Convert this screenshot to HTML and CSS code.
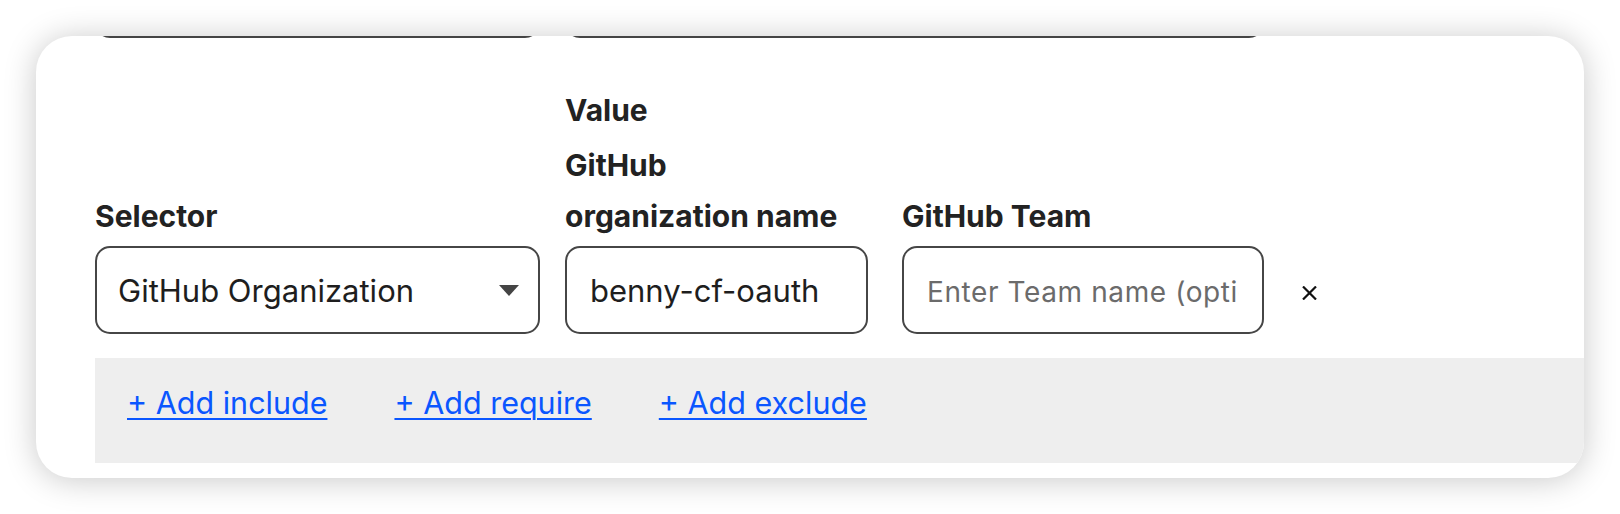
FILE: index.html
```html
<!DOCTYPE html>
<html lang="en">
<head>
    <meta charset="UTF-8">
    <meta name="viewport" content="width=device-width, initial-scale=1.0">
    <title>Access rule</title>
    <link rel="stylesheet" href="styles.css">
</head>
<body>
    <div class="card">
        <!-- previous rule row, scrolled mostly out of view -->
        <div class="prev-row">
            <div class="prev-box prev-selector"></div>
            <div class="prev-box prev-value"></div>
        </div>

        <div class="rule-row">
            <div class="field field-selector">
                <label class="field-label">Selector</label>
                <div class="select-box">
                    <span class="select-text">GitHub Organization</span>
                    <svg class="select-arrow" width="20" height="11" viewBox="0 0 20 11">
                        <path d="M0 0 L20 0 L10 11 Z" fill="#444"/>
                    </svg>
                </div>
            </div>
            <div class="field field-value">
                <div class="field-heading">Value</div>
                <label class="field-label">GitHub<br>organization name</label>
                <input class="text-input" type="text" value="benny-cf-oauth">
            </div>
            <div class="field field-team">
                <label class="field-label">GitHub Team</label>
                <input class="text-input" type="text" placeholder="Enter Team name (optional)">
            </div>
            <button class="remove-btn" type="button" aria-label="Remove">
                <svg width="15" height="14" viewBox="0 0 15 14">
                    <path d="M1 0.5 L14 13.5 M14 0.5 L1 13.5" stroke="#111" stroke-width="2.2" fill="none"/>
                </svg>
            </button>
        </div>

        <div class="add-bar">
            <a href="#" class="add-link">+ Add include</a>
            <a href="#" class="add-link">+ Add require</a>
            <a href="#" class="add-link">+ Add exclude</a>
        </div>
    </div>
</body>
</html>
```

FILE: styles.css
```css
html, body {
    margin: 0;
    padding: 0;
    background-color: #ffffff;
    font-family: Inter, "Noto Sans", sans-serif;
    color: #222222;
}

body {
    padding: 36px;
    box-sizing: border-box;
    height: 514px;
}

.card {
    background-color: #ffffff;
    border-radius: 36px;
    box-shadow: 0 2px 32px rgba(0, 0, 0, 0.22);
    overflow: hidden;
    padding: 0 0 16px 59px;
    height: 442px;
    box-sizing: border-box;
}

.prev-row {
    display: flex;
    height: 2px;
    overflow: hidden;
}

.prev-box {
    height: 30px;
    margin-top: -28px;
    border: 2px solid #444;
    border-radius: 15px;
    box-sizing: border-box;
}

.prev-selector {
    width: 445px;
    margin-right: 25px;
}

.prev-value {
    width: 699px;
}

.rule-row {
    display: flex;
    align-items: flex-end;
    margin-top: 48px;
}

.field {
    display: flex;
    flex-direction: column;
}

.field-selector {
    width: 445px;
    margin-right: 25px;
}

.field-value {
    width: 303px;
    margin-right: 34px;
}

.field-team {
    width: 362px;
}

.field-heading,
.field-label {
    font-size: 30px;
    font-weight: 700;
    color: #222;
}

.field-heading {
    line-height: 49px;
    margin-bottom: 5px;
}

.field-label {
    line-height: 51px;
    margin-bottom: 4px;
}

.select-box,
.text-input {
    height: 88px;
    border: 2px solid #464646;
    border-radius: 15px;
    box-sizing: border-box;
    background: #fff;
    font-family: inherit;
    font-size: 31px;
    color: #1e1e1e;
}

.select-box {
    display: flex;
    align-items: center;
    justify-content: space-between;
    padding: 0 19px 0 21px;
}

.text-input {
    width: 100%;
    padding: 0 23px;
    outline: none;
}

.text-input::placeholder {
    color: #6b6b6b;
    font-size: 28px;
    letter-spacing: 0.6px;
}

.remove-btn {
    background: none;
    border: none;
    padding: 0;
    margin: 0 0 34px 38px;
    width: 15px;
    height: 14px;
    display: flex;
    cursor: pointer;
}

.add-bar {
    display: flex;
    background-color: #eeeeee;
    margin-top: 24px;
    height: 105px;
    padding: 27px 0 0 32px;
    box-sizing: border-box;
}

.add-link {
    font-size: 30.5px;
    line-height: 36px;
    color: #0a56ff;
    text-decoration: underline;
    text-decoration-thickness: 2px;
    text-underline-offset: 4px;
    margin-right: 67px;
}
```
